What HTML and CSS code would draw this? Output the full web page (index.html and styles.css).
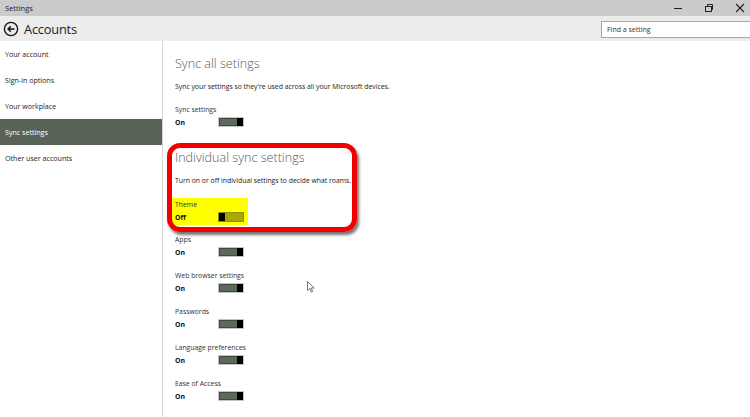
FILE: index.html
```html
<!DOCTYPE html>
<html>
<head>
<meta charset="utf-8">
<title>Settings</title>
<link rel="stylesheet" href="styles.css">
</head>
<body>
<div class="titlebar">
  <span class="title">Settings</span>
  <div class="winctl">
    <svg class="wc" width="12" height="12" viewBox="0 0 12 12"><path d="M2 6.5h8" stroke="#222" stroke-width="1"/></svg>
    <svg class="wc" width="12" height="12" viewBox="0 0 12 12"><rect x="2.5" y="4.5" width="6" height="5" fill="none" stroke="#222"/><path d="M4.5 4.5v-2h5v5h-1" fill="none" stroke="#222"/></svg>
    <svg class="wc" width="12" height="12" viewBox="0 0 12 12"><path d="M2 2l8 8M10 2l-8 8" stroke="#222" stroke-width="1.1"/></svg>
  </div>
</div>
<div class="header">
  <svg class="back" width="16" height="16" viewBox="0 0 16 16"><circle cx="8" cy="8" r="6.6" fill="none" stroke="#111" stroke-width="1.3"/><path d="M11.5 8H5M7.8 5.2L5 8l2.8 2.8" fill="none" stroke="#111" stroke-width="1.4"/></svg>
  <span class="pagetitle">Accounts</span>
  <div class="search">Find a setting</div>
</div>
<div class="main">
  <nav class="sidebar">
    <div class="navitem">Your account</div>
    <div class="navitem">Sign-in options</div>
    <div class="navitem">Your workplace</div>
    <div class="navitem active">Sync settings</div>
    <div class="navitem">Other user accounts</div>
  </nav>
  <section class="content">
    <h2 class="heading">Sync all setings</h2>
    <p class="desc">Sync your settings so they're used across all your Microsoft devices.</p>
    <div class="setting first">
      <div class="label">Sync settings</div>
      <div class="row"><span class="state">On</span><span class="toggle on"><span class="track"></span><span class="thumb"></span></span></div>
    </div>
    <h2 class="heading second">Individual sync settings</h2>
    <p class="desc">Turn on or off individual settings to decide what roams.</p>
    <div class="setting first marked">
      <div class="label">Theme</div>
      <div class="row"><span class="state">Off</span><span class="toggle off"><span class="thumb"></span><span class="track"></span></span></div>
    </div>
    <div class="setting">
      <div class="label">Apps</div>
      <div class="row"><span class="state">On</span><span class="toggle on"><span class="track"></span><span class="thumb"></span></span></div>
    </div>
    <div class="setting">
      <div class="label">Web browser settings</div>
      <div class="row"><span class="state">On</span><span class="toggle on"><span class="track"></span><span class="thumb"></span></span></div>
    </div>
    <div class="setting">
      <div class="label">Passwords</div>
      <div class="row"><span class="state">On</span><span class="toggle on"><span class="track"></span><span class="thumb"></span></span></div>
    </div>
    <div class="setting">
      <div class="label">Language preferences</div>
      <div class="row"><span class="state">On</span><span class="toggle on"><span class="track"></span><span class="thumb"></span></span></div>
    </div>
    <div class="setting">
      <div class="label">Ease of Access</div>
      <div class="row"><span class="state">On</span><span class="toggle on"><span class="track"></span><span class="thumb"></span></span></div>
    </div>
  </section>
</div>
<div class="callout"></div>
<svg class="cursor" width="8" height="12" viewBox="0 0 8 12"><path d="M0.5 0.5v9l2.2-2 1.6 3.6 1.4-.6-1.6-3.5h3z" fill="#fff" stroke="#555" stroke-width="0.8"/></svg>
</body>
</html>
```
FILE: styles.css
```css
html, body {
  margin: 0;
  padding: 0;
  background: #fff;
  width: 750px;
  height: 417px;
  overflow: hidden;
  font-family: "Open Sans", "Noto Sans", sans-serif;
  color: #222;
  position: relative;
}
.titlebar {
  height: 16px;
  background: #cbcbcb;
  display: flex;
  align-items: center;
  justify-content: space-between;
  padding-left: 5px;
}
.title {
  font-size: 7.5px;
  color: #222;
}
.winctl {
  display: flex;
  align-items: center;
  gap: 19px;
  padding-right: 4px;
}
.wc { display: block; }
.header {
  height: 25px;
  background: #ececec;
  display: flex;
  align-items: center;
  padding-left: 3px;
}
.back { display: block; margin-right: 5px; }
.pagetitle {
  font-size: 12.8px;
  color: #222;
  letter-spacing: -0.2px;
  flex: 1;
}
.search {
  width: 143px;
  height: 15px;
  border: 1px solid #a8a8a8;
  background: #fff;
  font-size: 7px;
  color: #333;
  display: flex;
  align-items: center;
  padding-left: 5px;
  margin-right: -1px;
  margin-top: 1px;
}
.main {
  display: flex;
  height: 376px;
}
.sidebar {
  width: 162px;
  border-right: 1px solid #d6d6d6;
  flex-shrink: 0;
}
.navitem {
  height: 26px;
  line-height: 26px;
  padding-left: 5px;
  font-size: 7.1px;
  color: #222;
}
.navitem.active {
  background: #586256;
  color: #fff;
}
.content {
  padding-left: 12px;
  padding-top: 13px;
}
.heading {
  margin: 0;
  font-size: 12.6px;
  font-weight: 300;
  color: #5a5a5a;
  line-height: 20px;
  height: 20px;
}
.heading.second { margin-top: 20px; }
.desc {
  margin: 7px 0 0;
  font-size: 6.85px;
  line-height: 12px;
  color: #222;
}
.setting { margin-top: 12px; }
.setting.first { margin-top: 11px; }
.label {
  font-size: 6.85px;
  line-height: 12px;
  color: #333;
}
.row {
  display: flex;
  align-items: center;
  height: 12px;
}
.state {
  width: 43px;
  font-size: 6.9px;
  font-weight: 700;
  color: #111;
}
.toggle {
  display: flex;
  width: 26px;
  height: 10px;
  border: 1px solid #c4c4c4;
  box-sizing: border-box;
  background: #e6e6e6;
}
.track { flex: 1; }
.toggle.on .track {
  background: #5c6a5c;
  border: 1px solid #3e4a3e;
  border-right: none;
}
.thumb {
  width: 6px;
  background: #000;
}
.toggle.off { border-color: #8f8d00; }
.toggle.off .track { background: #a9a700; }
.marked {
  background: #ffff00;
  width: 70px;
  margin-left: -3px;
  padding: 1px 3px 2px;
  margin-bottom: -3px;
  margin-top: 10px;
}
.callout {
  position: absolute;
  left: 167px;
  top: 143px;
  width: 180px;
  height: 79px;
  border: 5px solid #f20000;
  border-radius: 13px;
  box-shadow: 2px 3px 3px rgba(0, 0, 0, 0.55);
}
.cursor {
  position: absolute;
  left: 307px;
  top: 281px;
}
```
